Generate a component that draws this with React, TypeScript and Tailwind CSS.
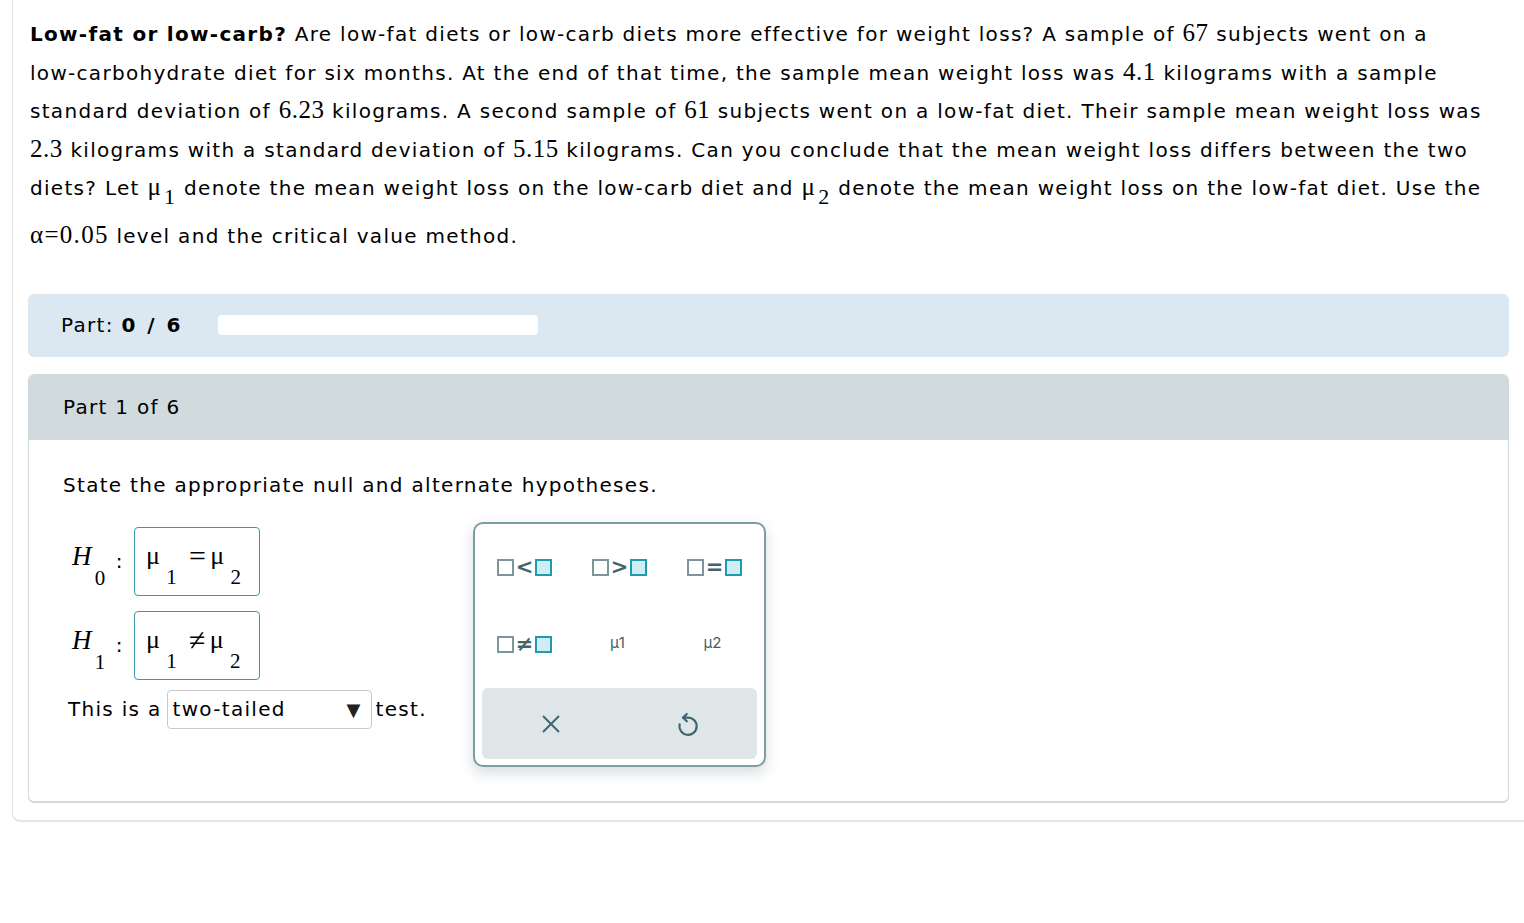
import React from "react";

const serif = "font-['Liberation_Serif','Times_New_Roman',serif]";

function Num({ children }: { children: React.ReactNode }) {
  return <span className={`${serif} text-[25px] leading-none tracking-[0.5px]`}>{children}</span>;
}

function Mu({ n }: { n: string }) {
  return (
    <span className={`${serif} text-[25px] leading-none`}>
      μ<span className="relative top-[9px] text-[22px] ml-[2px]">{n}</span>
    </span>
  );
}

function KeyBoxes({ op }: { op: string }) {
  return (
    <span className="flex items-center gap-[2px]">
      <span className="w-[17px] h-[17px] border-2 border-[#7c969c] bg-white" />
      <span className="text-[21px] leading-none font-bold text-[#44646c] font-['DejaVu_Sans',sans-serif]">{op}</span>
      <span className="w-[17px] h-[17px] border-2 border-[#1e9bb1] bg-[#cfeef3]" />
    </span>
  );
}

function HypBox({ op }: { op: string }) {
  return (
    <div className={`w-[126px] h-[69px] border-[1.5px] border-[#3a9aab] rounded-[4px] flex items-center pl-[11px] ${serif} text-black`}>
      <span className="flex items-baseline leading-none relative top-[-7px]">
        <span className="text-[26px]">μ</span>
        <span className="relative top-[20px] text-[21px] ml-[5px]">1</span>
        <span className="ml-[11px] text-[30px] relative top-[2px]">{op}</span>
        <span className="ml-[3px] text-[26px]">μ</span>
        <span className="relative top-[20px] text-[21px] ml-[5px]">2</span>
      </span>
    </div>
  );
}

function HLabel({ n }: { n: string }) {
  return (
    <div className={`flex items-center w-[71px] pl-[9px] ${serif} text-black`}>
      <span className="flex items-baseline leading-none relative top-[-5px]">
        <span className="italic text-[27px]">H</span>
        <span className="relative top-[20px] text-[21px] ml-[2px]">{n}</span>
        <span className="ml-[9px] relative top-[3px] font-['DejaVu_Sans',sans-serif] text-[20px]">:</span>
      </span>
    </div>
  );
}

export default function App() {
  return (
    <div className="min-h-screen bg-white overflow-hidden text-black font-['DejaVu_Sans','Verdana',sans-serif] tracking-[1.3px]">
      <div className="ml-3 w-[1540px] border-l border-b-2 border-[#e0e6e9] rounded-bl-[8px] pl-[15px] pb-[17px]">
        {/* QUESTION */}
        <div className="pt-[15px] pl-[2px] text-[20px] leading-[38.5px]">
          <div className="whitespace-nowrap h-[38.5px]">
            <b>Low-fat or low-carb?</b> Are low-fat diets or low-carb diets more effective for weight loss? A sample of <Num>67</Num> subjects went on a
          </div>
          <div className="whitespace-nowrap h-[38.5px]">
            low-carbohydrate diet for six months. At the end of that time, the sample mean weight loss was <Num>4.1</Num> kilograms with a sample
          </div>
          <div className="whitespace-nowrap h-[38.5px]">
            standard deviation of <Num>6.23</Num> kilograms. A second sample of <Num>61</Num> subjects went on a low-fat diet. Their sample mean weight loss was
          </div>
          <div className="whitespace-nowrap h-[38.5px]">
            <Num>2.3</Num> kilograms with a standard deviation of <Num>5.15</Num> kilograms. Can you conclude that the mean weight loss differs between the two
          </div>
          <div className="whitespace-nowrap h-[48px]">
            diets? Let <Mu n="1" /> denote the mean weight loss on the low-carb diet and <Mu n="2" /> denote the mean weight loss on the low-fat diet. Use the
          </div>
          <div className="whitespace-nowrap h-[38.5px]">
            <span className={`${serif} text-[25px] leading-none`}>α=0.05</span> level and the critical value method.
          </div>
        </div>

        {/* PROGRESS */}
        <div className="mt-[38px] w-[1481px] h-[63px] rounded-[6px] bg-[#dbe8f1] flex items-center pl-[33px] text-[20px]">
          <span className="w-[157px] whitespace-nowrap">
            Part: <b className="tracking-[2.5px]">0 / 6</b>
          </span>
          <div className="w-[320px] h-[20px] rounded-[4px] bg-white" />
        </div>

        {/* PART 1 */}
        <div className="mt-[17px] w-[1481px] h-[429px] rounded-[6px] border border-b-2 border-[#cfd8dc] overflow-hidden">
          <div className="h-[65px] bg-[#d1dadd] flex items-center pl-[34px] text-[20px]">Part 1 of 6</div>
          <div className="pl-[34px] pt-[30px] text-[20px]">
            <div>State the appropriate null and alternate hypotheses.</div>
            <div className="mt-[22px] flex items-start">
              <div className="w-[410px] flex flex-col">
                <div className="flex items-center mt-[5px]">
                  <HLabel n="0" />
                  <HypBox op="=" />
                </div>
                <div className="flex items-center mt-[15px]">
                  <HLabel n="1" />
                  <HypBox op="≠" />
                </div>
                <div className="flex items-center mt-[10px] pl-[5px] whitespace-nowrap">
                  <span>This is a</span>
                  <div className="ml-[5px] w-[205px] h-[39px] border border-[#c9c9c9] rounded-[4px] flex items-center justify-between pl-[5px] pr-[9px]">
                    <span>two-tailed</span>
                    <span className="text-[18px] text-[#222]">▼</span>
                  </div>
                  <span className="ml-[4px]">test.</span>
                </div>
              </div>

              {/* KEYPAD */}
              <div className="w-[293px] h-[245px] border-2 border-[#7e9da3] rounded-[10px] bg-white shadow-[0_6px_14px_rgba(90,120,130,0.25)] flex flex-col pb-[6px] tracking-normal">
                <div className="grid grid-cols-[95px_95px_95px] justify-center h-[80px] pt-[33px] items-start justify-items-center">
                  <KeyBoxes op="<" />
                  <KeyBoxes op=">" />
                  <KeyBoxes op="=" />
                </div>
                <div className="grid grid-cols-[95px_95px_95px] justify-center h-[84px] pt-[30px] items-start justify-items-center font-['Inter',sans-serif] text-[15px] text-[#3f5f67]">
                  <KeyBoxes op="≠" />
                  <span className="mt-[-2px] mr-[4px]">μ1</span>
                  <span className="mt-[-2px] mr-[4px]">μ2</span>
                </div>
                <div className="flex-1 mx-[7px] rounded-[6px] bg-[#dfe6e8] grid grid-cols-2 items-center justify-items-center">
                  <svg width="22" height="22" viewBox="0 0 22 22" className="mt-[2px]">
                    <path d="M3 3 L19 19 M19 3 L3 19" stroke="#3f666f" strokeWidth="2" fill="none" />
                  </svg>
                  <svg width="30" height="32" viewBox="0 0 24 26" className="mt-[4px]">
                    <path d="M8 7 H12 A7 7 0 1 1 5.2 12.5" stroke="#3f666f" strokeWidth="1.8" fill="none" strokeLinecap="round" />
                    <path d="M11 4 L8 7 L11 10" stroke="#3f666f" strokeWidth="1.8" fill="none" strokeLinecap="round" strokeLinejoin="round" />
                  </svg>
                </div>
              </div>
            </div>
          </div>
        </div>
      </div>
    </div>
  );
}
